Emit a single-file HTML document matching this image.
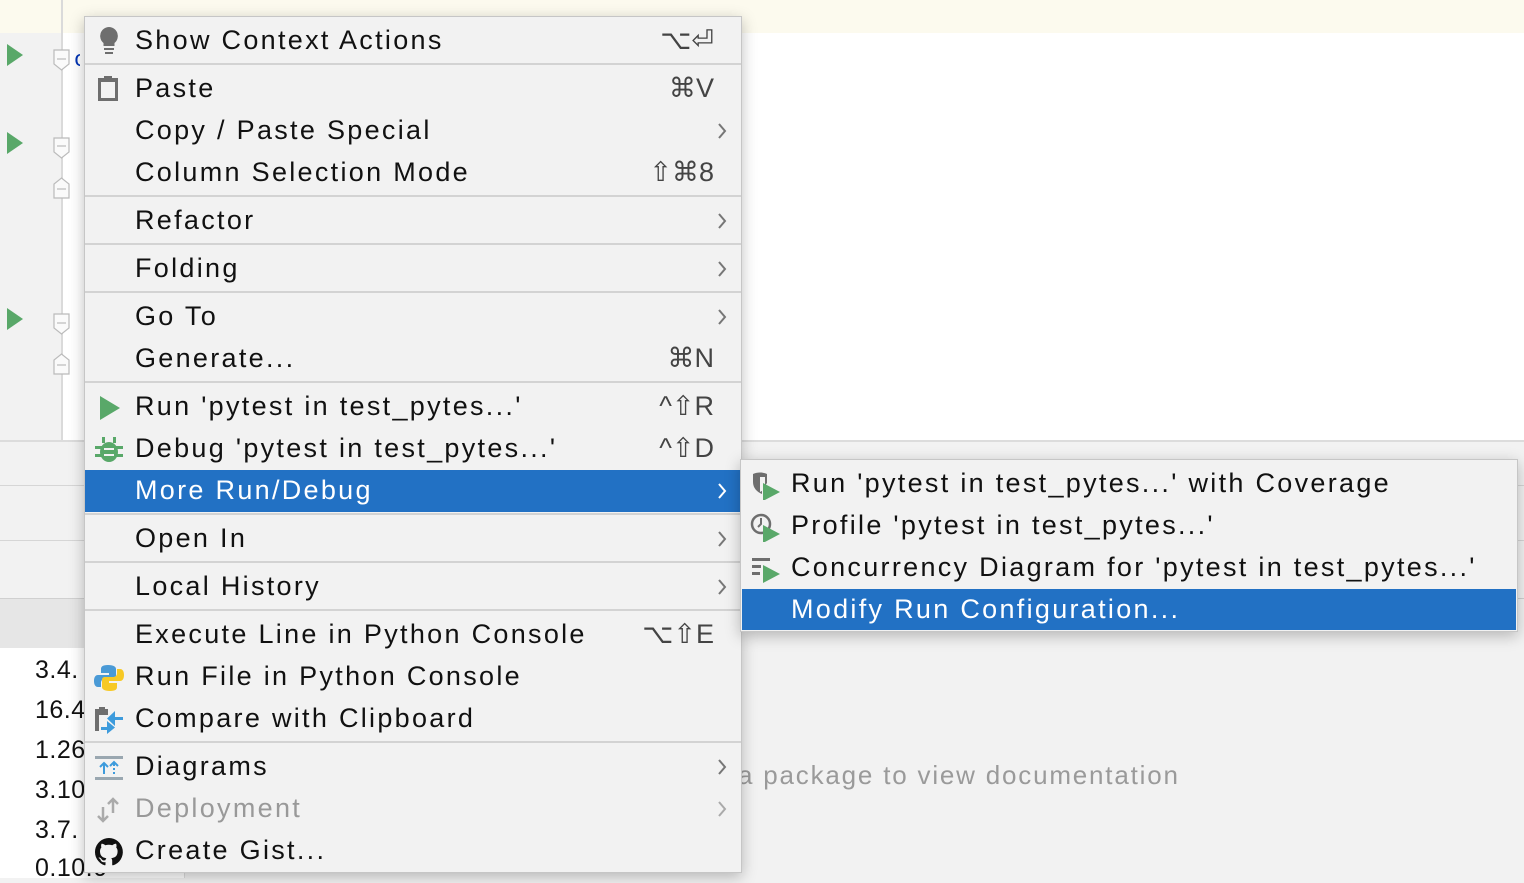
<!DOCTYPE html>
<html><head><meta charset="utf-8"><style>
*{margin:0;padding:0;box-sizing:border-box}
body{width:1524px;height:878px;overflow:hidden;position:relative;background:#f2f2f2;font-family:"Liberation Sans","DejaVu Sans",sans-serif}
.a{position:absolute}
.menu{position:absolute;left:84px;top:16px;width:658px;height:857px;background:#f2f2f2;border:1px solid #c6c6c6;box-shadow:0 4px 14px rgba(0,0,0,.25)}
.row{position:absolute;left:0;width:656px;height:42px;font-size:27px;letter-spacing:2.3px;color:#111;line-height:42px}
.row .t{position:absolute;left:50px;top:-1px}
.row .k{position:absolute;right:27px;top:-1px;color:#444;letter-spacing:0}
.row .c{position:absolute;right:14px;top:13px}
.sep{position:absolute;left:0;width:656px;height:2px;background:#d3d3d3}
.dis{color:#999}
.ic{position:absolute;left:8px;top:7px}
.sub{position:absolute;left:740px;top:459px;width:778px;height:173px;background:#f2f2f2;border:1px solid #c6c6c6;box-shadow:0 4px 14px rgba(0,0,0,.25)}
.srow{position:absolute;left:1px;width:774px;height:42px;font-size:27px;letter-spacing:2.3px;line-height:42px;color:#111}
.srow .t{position:absolute;left:49px;top:-1px}
.row.hl,.srow.hl{background:#2271c4;color:#fff}
.num{position:absolute;left:35px;font-size:25px;color:#111;letter-spacing:.5px}
</style></head><body>
<div class="a" style="left:0;top:0;width:1524px;height:33px;background:#fcfaee"></div>
<div class="a" style="left:62px;top:33px;width:1462px;height:407px;background:#fff"></div>
<div class="a" style="left:0;top:33px;width:62px;height:407px;background:#f2f2f2"></div>
<div class="a" style="left:61px;top:0;width:2px;height:440px;background:#dadada"></div>
<div class="a" style="left:0;top:440px;width:1524px;height:2px;background:#dcdcdc"></div>
<div class="a" style="left:0;top:485px;width:1524px;height:1px;background:#d6d6d6"></div>
<div class="a" style="left:0;top:540px;width:1524px;height:1px;background:#d6d6d6"></div>
<div class="a" style="left:0;top:598px;width:1524px;height:1px;background:#d0d0d0"></div>
<div class="a" style="left:0;top:599px;width:90px;height:49px;background:#e6e6e6"></div>
<div class="a" style="left:0;top:648px;width:185px;height:230px;background:#fff"></div>
<div class="a" style="left:184px;top:648px;width:1px;height:230px;background:#ddd"></div>
<svg class="a" style="left:0;top:40px" width="80" height="340">
<polygon points="7,4 23,15 7,26" fill="#59a869"/>
<polygon points="7,92 23,103 7,114" fill="#59a869"/>
<polygon points="7,268 23,279 7,290" fill="#59a869"/>
<g fill="#fafafa" stroke="#bbb" stroke-width="1.2">
<path d="M54,10h15v14l-7.5,6l-7.5,-6z"/><line x1="57" y1="19" x2="66" y2="19"/>
<path d="M54,98h15v14l-7.5,6l-7.5,-6z"/><line x1="57" y1="106" x2="66" y2="106"/>
<path d="M54,158v-14l7.5,-6l7.5,6v14z"/><line x1="57" y1="149" x2="66" y2="149"/>
<path d="M54,274h15v14l-7.5,6l-7.5,-6z"/><line x1="57" y1="283" x2="66" y2="283"/>
<path d="M54,334v-14l7.5,-6l7.5,6v14z"/><line x1="57" y1="325" x2="66" y2="325"/>
</g>
<text x="74" y="26" font-size="22" fill="#0033b3" font-family="Liberation Mono">c</text>
</svg>
<div class="num" style="top:656px">3.4.</div>
<div class="num" style="top:696px">16.4</div>
<div class="num" style="top:736px">1.26</div>
<div class="num" style="top:776px">3.10</div>
<div class="num" style="top:816px">3.7.</div>
<div class="num" style="top:854px">0.10.0</div>
<div class="a" style="left:738px;top:760px;font-size:26px;color:#9a9a9a;letter-spacing:1.8px">a package to view documentation</div>

<div class="menu">
<div class="row" style="top:3px"><svg class="ic" width="32" height="30"><path d="M16,0a9,9 0 0 1 5.5,16v3h-11v-3a9,9 0 0 1 5.5,-16z" fill="#6e6e6e"/><rect x="11" y="21" width="10" height="2" fill="#6e6e6e"/><rect x="12" y="25" width="8" height="2" fill="#6e6e6e"/></svg><span class="t">Show Context Actions</span><span class="k">⌥⏎</span></div>
<div class="sep" style="top:46px"></div>
<div class="row" style="top:51px"><svg class="ic" width="32" height="30"><path d="M5,3h6v-2h8v2h6v23h-20z" fill="#6e6e6e"/><rect x="8" y="7" width="14" height="16" fill="#f2f2f2"/></svg><span class="t">Paste</span><span class="k">⌘V</span></div>
<div class="row" style="top:93px"><span class="t">Copy / Paste Special</span><svg class="c" width="10" height="16"><path d="M2,1l6,7l-6,7" stroke="#777" stroke-width="2" fill="none"/></svg></div>
<div class="row" style="top:135px"><span class="t">Column Selection Mode</span><span class="k">⇧⌘8</span></div>
<div class="sep" style="top:178px"></div>
<div class="row" style="top:183px"><span class="t">Refactor</span><svg class="c" width="10" height="16"><path d="M2,1l6,7l-6,7" stroke="#777" stroke-width="2" fill="none"/></svg></div>
<div class="sep" style="top:226px"></div>
<div class="row" style="top:231px"><span class="t">Folding</span><svg class="c" width="10" height="16"><path d="M2,1l6,7l-6,7" stroke="#777" stroke-width="2" fill="none"/></svg></div>
<div class="sep" style="top:274px"></div>
<div class="row" style="top:279px"><span class="t">Go To</span><svg class="c" width="10" height="16"><path d="M2,1l6,7l-6,7" stroke="#777" stroke-width="2" fill="none"/></svg></div>
<div class="row" style="top:321px"><span class="t">Generate...</span><span class="k">⌘N</span></div>
<div class="sep" style="top:364px"></div>
<div class="row" style="top:369px"><svg class="ic" width="32" height="30"><polygon points="7,3 27,15 7,27" fill="#59a869"/></svg><span class="t">Run 'pytest in test_pytes...'</span><span class="k">^⇧R</span></div>
<div class="row" style="top:411px"><svg class="ic" width="32" height="30"><g fill="#59a869"><ellipse cx="16" cy="17" rx="9" ry="10"/><rect x="2" y="11" width="28" height="3"/><rect x="2" y="19" width="28" height="3"/><rect x="9" y="2" width="3" height="6"/><rect x="20" y="2" width="3" height="6"/></g><rect x="11" y="13" width="10" height="2" fill="#f2f2f2"/><rect x="11" y="19" width="10" height="2" fill="#f2f2f2"/></svg><span class="t">Debug 'pytest in test_pytes...'</span><span class="k">^⇧D</span></div>
<div class="row hl" style="top:453px"><span class="t">More Run/Debug</span><svg class="c" width="10" height="16"><path d="M2,1l6,7l-6,7" stroke="#fff" stroke-width="2" fill="none"/></svg></div>
<div class="sep" style="top:496px"></div>
<div class="row" style="top:501px"><span class="t">Open In</span><svg class="c" width="10" height="16"><path d="M2,1l6,7l-6,7" stroke="#777" stroke-width="2" fill="none"/></svg></div>
<div class="sep" style="top:544px"></div>
<div class="row" style="top:549px"><span class="t">Local History</span><svg class="c" width="10" height="16"><path d="M2,1l6,7l-6,7" stroke="#777" stroke-width="2" fill="none"/></svg></div>
<div class="sep" style="top:592px"></div>
<div class="row" style="top:597px"><span class="t">Execute Line in Python Console</span><span class="k">⌥⇧E</span></div>
<div class="row" style="top:639px"><svg class="ic" width="32" height="30"><path d="M15,2c-6,0-7,2-7,4v4h8v2h-11c-3,0-4,3-4,6s1,6,4,6h3v-4c0-3,2-4,4-4h8c2,0,3-1,3-3v-7c0-2-2-4-8-4z" fill="#4a9ad6"/><path d="M17,28c6,0,7-2,7-4v-4h-8v-2h11c3,0,4-3,4-6s-1-6-4-6h-3v4c0,3-2,4-4,4h-8c-2,0-3,1-3,3v7c0,2,2,4,8,4z" fill="#f7c925"/></svg><span class="t">Run File in Python Console</span></div>
<div class="row" style="top:681px"><svg class="ic" width="32" height="30"><path d="M2,4h4v-2h6v2h3v6h-9v16h-4z" fill="#6e6e6e"/><path d="M22,6v6h8v3h-8v6l-8,-7.5z" fill="#3d9bdc"/><path d="M14,16v6h-6v3h6v4l8,-6.5z" fill="#3d9bdc"/></svg><span class="t">Compare with Clipboard</span></div>
<div class="sep" style="top:724px"></div>
<div class="row" style="top:729px"><svg class="ic" width="32" height="30"><rect x="2" y="3" width="28" height="3" fill="#9aa7b0"/><rect x="2" y="24" width="28" height="3" fill="#9aa7b0"/><g stroke="#3d9bdc" stroke-width="2" fill="none"><path d="M11,21v-11M7,14l4,-4l4,4"/><path d="M21,21v-2M21,17v-2M21,13v-3M17,13l4,-4l4,4"/></g></svg><span class="t">Diagrams</span><svg class="c" width="10" height="16"><path d="M2,1l6,7l-6,7" stroke="#777" stroke-width="2" fill="none"/></svg></div>
<div class="row dis" style="top:771px"><svg class="ic" width="32" height="30"><g stroke="#aaa" stroke-width="2.5" fill="none"><path d="M10,26v-14M5,21l5,5l5,-5"/><path d="M20,4v14M15,9l5,-5l5,5"/></g></svg><span class="t">Deployment</span><svg class="c" width="10" height="16"><path d="M2,1l6,7l-6,7" stroke="#aaa" stroke-width="2" fill="none"/></svg></div>
<div class="row" style="top:813px"><svg class="ic" width="32" height="30"><path d="M16,1a14,14 0 0 0-4.4,27.3c.7.1.9-.3.9-.7v-2.5c-3.9.8-4.7-1.7-4.7-1.7-.6-1.6-1.6-2-1.6-2-1.3-.9.1-.9.1-.9 1.4.1 2.1 1.4 2.1 1.4 1.3 2.2 3.3 1.5 4.1 1.2.1-.9.5-1.5.9-1.9-3.1-.4-6.4-1.6-6.4-6.9 0-1.5.5-2.8 1.4-3.8-.1-.4-.6-1.8.1-3.7 0 0 1.2-.4 3.8 1.4a13 13 0 0 1 7 0c2.7-1.8 3.8-1.4 3.8-1.4.8 1.9.3 3.3.1 3.7.9 1 1.4 2.2 1.4 3.8 0 5.4-3.3 6.5-6.4 6.9.5.4 1 1.3 1 2.6v3.8c0 .4.2.8 1 .7A14,14 0 0 0 16,1z" fill="#111"/></svg><span class="t">Create Gist...</span></div>
</div>

<div class="sub">
<div class="srow" style="top:3px"><svg class="ic" width="36" height="30"><path d="M3,4c4,-2 10,-2 14,0v9l-5,7v4c-5,-2-9,-6-9,-12z" fill="#6e6e6e"/><path d="M10,7h5v12l-5,3z" fill="#f2f2f2"/><polygon points="13,13 30,22 13,31" fill="#59a869"/></svg><span class="t">Run 'pytest in test_pytes...' with Coverage</span></div>
<div class="srow" style="top:45px"><svg class="ic" width="36" height="30"><circle cx="11" cy="12" r="9" fill="none" stroke="#6e6e6e" stroke-width="2.5"/><path d="M11,6v6l-3,3" stroke="#6e6e6e" stroke-width="2" fill="none"/><polygon points="13,13 30,22 13,31" fill="#59a869"/></svg><span class="t">Profile 'pytest in test_pytes...'</span></div>
<div class="srow" style="top:87px"><svg class="ic" width="36" height="30"><g fill="#6e6e6e"><rect x="2" y="4" width="18" height="3"/><rect x="2" y="11" width="9" height="3"/><rect x="2" y="18" width="8" height="3"/></g><polygon points="13,11 30,20 13,29" fill="#59a869"/></svg><span class="t">Concurrency Diagram for 'pytest in test_pytes...'</span></div>
<div class="srow hl" style="top:129px;height:41px"><span class="t">Modify Run Configuration...</span></div>
</div>
</body></html>
